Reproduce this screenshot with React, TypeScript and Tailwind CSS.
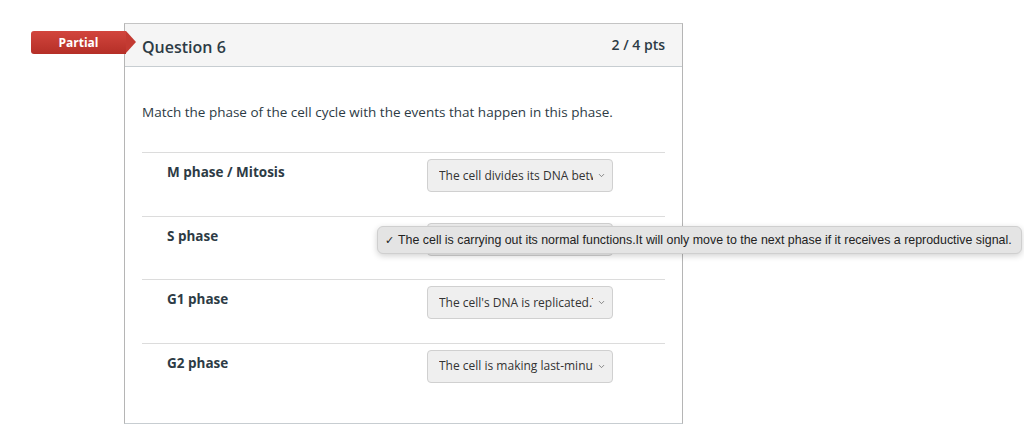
import { ChevronDown } from 'lucide-react';

const rows = [
  { label: 'M phase / Mitosis', value: 'The cell divides its DNA betw' },
  { label: 'S phase', value: 'The cell is carrying out its nor' },
  { label: 'G1 phase', value: "The cell's DNA is replicated.T" },
  { label: 'G2 phase', value: 'The cell is making last-minut' },
];

function Select({ value }: { value: string }) {
  return (
    <div className="w-[186px] h-[33px] rounded-[4px] border border-[#d0d0d0] bg-[#efefef] flex items-center pl-[11px] pr-[6px] text-[12px] text-[#333]">
      <span className="flex-1 overflow-hidden whitespace-nowrap">{value}</span>
      <ChevronDown className="w-[9px] h-[9px] text-[#666] ml-[4px]" strokeWidth={2} />
    </div>
  );
}

export default function App() {
  return (
    <div className="relative w-[1024px] h-[440px] bg-white font-['Open_Sans',sans-serif] text-[#2d3b45]">
      <div className="flex pt-[23px]">
        <div className="w-[124px] shrink-0 pt-[8px] pl-[31px]">
          <div className="relative w-[95px] h-[23px] bg-gradient-to-b from-[#d2453d] to-[#b52f27] rounded-l-[3px] flex items-center justify-center text-white text-[12px] font-bold">
            Partial
            <div className="absolute right-[-10px] top-0 w-0 h-0 border-y-[11.5px] border-y-transparent border-l-[10px] border-l-[#c33a32]" />
          </div>
        </div>
        <div className="w-[559px] h-[401px] border border-[#c7cdd1] border-t-[#c4c4c4] border-x-[#b5b5b5]">
          <div className="h-[43px] bg-[#f5f5f5] border-b border-[#c7cdd1] flex items-center justify-between pl-[17px] pr-[17px]">
            <span className="text-[16px] font-semibold text-[#2d3b45] pt-[4px]">Question 6</span>
            <span className="text-[14px] font-semibold text-[#2d3b45] -mt-[2px]">2 / 4 pts</span>
          </div>
          <div className="pl-[17px] pr-[17px] pt-[36px]">
            <p className="text-[13.5px] text-[#2d3b45] leading-[18px]">
              Match the phase of the cell cycle with the events that happen in this phase.
            </p>
            <div className="mt-[31px]">
              {rows.map((r) => (
                <div key={r.label} className="h-[63.5px] border-t border-[#dcdcdc] flex items-start">
                  <div className="w-[285px] pl-[25px] pt-[9px] text-[13.5px] font-bold text-[#2d3b45]">{r.label}</div>
                  <div className="pt-[6px]">
                    <Select value={r.value} />
                  </div>
                </div>
              ))}
            </div>
          </div>
        </div>
      </div>
      <div className="absolute left-[377px] top-[226px] w-[645px] h-[28px] rounded-[6px] bg-[#e4e4e4] border border-[#cfcfcf] shadow-[0_2px_6px_rgba(0,0,0,0.18)] flex items-center pl-[7px] text-[12.4px] text-[#222] font-['Liberation_Sans',sans-serif] whitespace-nowrap">
        <span className="mr-[4px] text-[11px]">✓</span>
        The cell is carrying out its normal functions.It will only move to the next phase if it receives a reproductive signal.
      </div>
    </div>
  );
}
